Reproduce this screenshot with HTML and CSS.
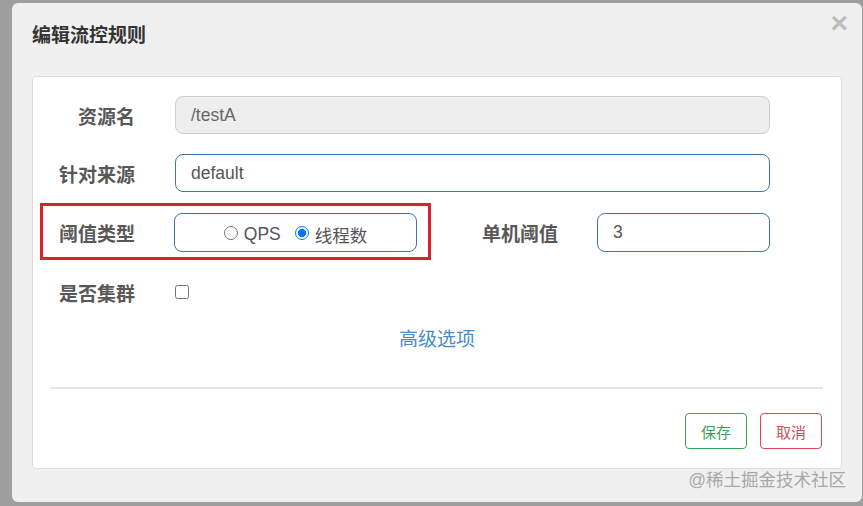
FILE: index.html
```html
<!DOCTYPE html>
<html>
  <head>
    <title>编辑流控规则</title>
    <link rel="stylesheet" href="styles.css">
  </head>
  <body>
    <div class="page-line-top"></div>
    <div class="modal">
      <div class="modal-header">
        <h4 class="modal-title">编辑流控规则</h4>
        <span class="close">&times;</span>
      </div>
      <div class="panel">
        <div class="form-row">
          <label class="label">资源名</label>
          <input class="field field-disabled" value="/testA" disabled />
        </div>
        <div class="form-row">
          <label class="label">针对来源</label>
          <input class="field" value="default" />
        </div>
        <div class="form-row form-row-grade">
          <div class="highlight"></div>
          <label class="label">阈值类型</label>
          <div class="radio-group">
            <label class="radio"><input type="radio" name="grade" />QPS</label>
            <label class="radio"><input type="radio" name="grade" checked />线程数</label>
          </div>
          <label class="label label-count">单机阈值</label>
          <input class="field field-count" value="3" />
        </div>
        <div class="form-row form-row-cluster">
          <label class="label">是否集群</label>
          <input type="checkbox" class="checkbox" />
        </div>
        <div class="advanced">
          <a href="#">高级选项</a>
        </div>
        <div class="divider"></div>
        <div class="buttons">
          <button class="btn btn-save">保存</button>
          <button class="btn btn-cancel">取消</button>
        </div>
      </div>
      <div class="watermark">@稀土掘金技术社区</div>
    </div>
  </body>
</html>
```

FILE: styles.css
```css
body {
  margin: 0;
  background: #9e9e9e;
  font-family: "Liberation Sans", "Noto Sans CJK SC", sans-serif;
  overflow: hidden;
}

.page-line-top {
  height: 3px;
}

.modal {
  margin-left: 12px;
  width: 850px;
  height: 499px;
  background: #f0f0f0;
  border-radius: 6px;
  box-sizing: border-box;
}

.modal-header {
  display: flex;
  align-items: flex-start;
  height: 73px;
  padding: 20px 14px 0 20px;
  box-sizing: border-box;
}

.modal-title {
  margin: 0;
  font-size: 19px;
  line-height: 26px;
  font-weight: bold;
  color: #333333;
}

.close {
  margin-left: auto;
  margin-top: -13px;
  font-size: 30px;
  line-height: 26px;
  font-weight: bold;
  color: #bdbdbd;
}

.panel {
  margin: 0 20px;
  height: 393px;
  background: #ffffff;
  border: 1px solid #dddddd;
  border-radius: 4px;
  padding-top: 19px;
  box-sizing: border-box;
}

.form-row {
  display: flex;
  align-items: center;
  height: 38px;
  margin-bottom: 20px;
}

.form-row-grade {
  position: relative;
  height: 39px;
  margin-top: 21px;
}

.form-row-cluster {
  margin-top: 21px;
}

.label {
  width: 102px;
  margin-right: 40px;
  text-align: right;
  font-size: 19px;
  font-weight: bold;
  color: #585858;
  flex-shrink: 0;
}

.field {
  width: 595px;
  height: 38px;
  box-sizing: border-box;
  padding: 0 15px;
  border: 1px solid #3d76a8;
  border-radius: 8px;
  font-family: inherit;
  font-size: 17.5px;
  color: #555555;
  background: #ffffff;
  outline: none;
}

.field-disabled {
  background: #eeeeee;
  border-color: #cfcfcf;
  color: #666666;
}

.radio-group {
  width: 243px;
  height: 39px;
  margin-left: -1px;
  box-sizing: border-box;
  border: 1px solid #3d76a8;
  border-radius: 8px;
  display: flex;
  align-items: center;
  justify-content: center;
  padding-top: 3px;
}

.radio {
  display: flex;
  align-items: center;
  font-size: 17.5px;
  color: #555555;
}

.radio + .radio {
  margin-left: 14px;
}

.radio input {
  width: 14px;
  height: 14px;
  margin: 0 6px 2px 0;
}

.label-count {
  margin-left: 38px;
  margin-right: 39px;
  width: 103px;
}

.field-count {
  width: 173px;
  height: 39px;
}

.highlight {
  position: absolute;
  left: 7px;
  top: -10px;
  width: 391px;
  height: 57px;
  box-sizing: border-box;
  border: 3px solid #d8232c;
}

.checkbox {
  width: 14px;
  height: 14px;
  margin: 0 0 0 0;
}

.advanced {
  margin-top: -4px;
  text-align: center;
  line-height: 26px;
}

.advanced a {
  font-size: 19px;
  color: #4a8bc4;
  text-decoration: none;
}

.divider {
  margin: 33px 18px 0 18px;
  height: 2px;
  background: #e6e6e6;
}

.buttons {
  display: flex;
  justify-content: flex-end;
  gap: 13px;
  margin: 24px 19px 0 0;
}

.btn {
  width: 62px;
  height: 36px;
  background: #ffffff;
  border: 1px solid;
  border-radius: 4px;
  font-family: inherit;
  font-size: 15px;
  padding: 0;
}

.btn-save {
  border-color: #3aa15b;
  color: #3aa15b;
}

.btn-cancel {
  border-color: #d54a5a;
  color: #d54a5a;
}

.watermark {
  text-align: right;
  padding-right: 16px;
  line-height: 22px;
  font-size: 17.5px;
  color: #a8a8a8;
}
```
